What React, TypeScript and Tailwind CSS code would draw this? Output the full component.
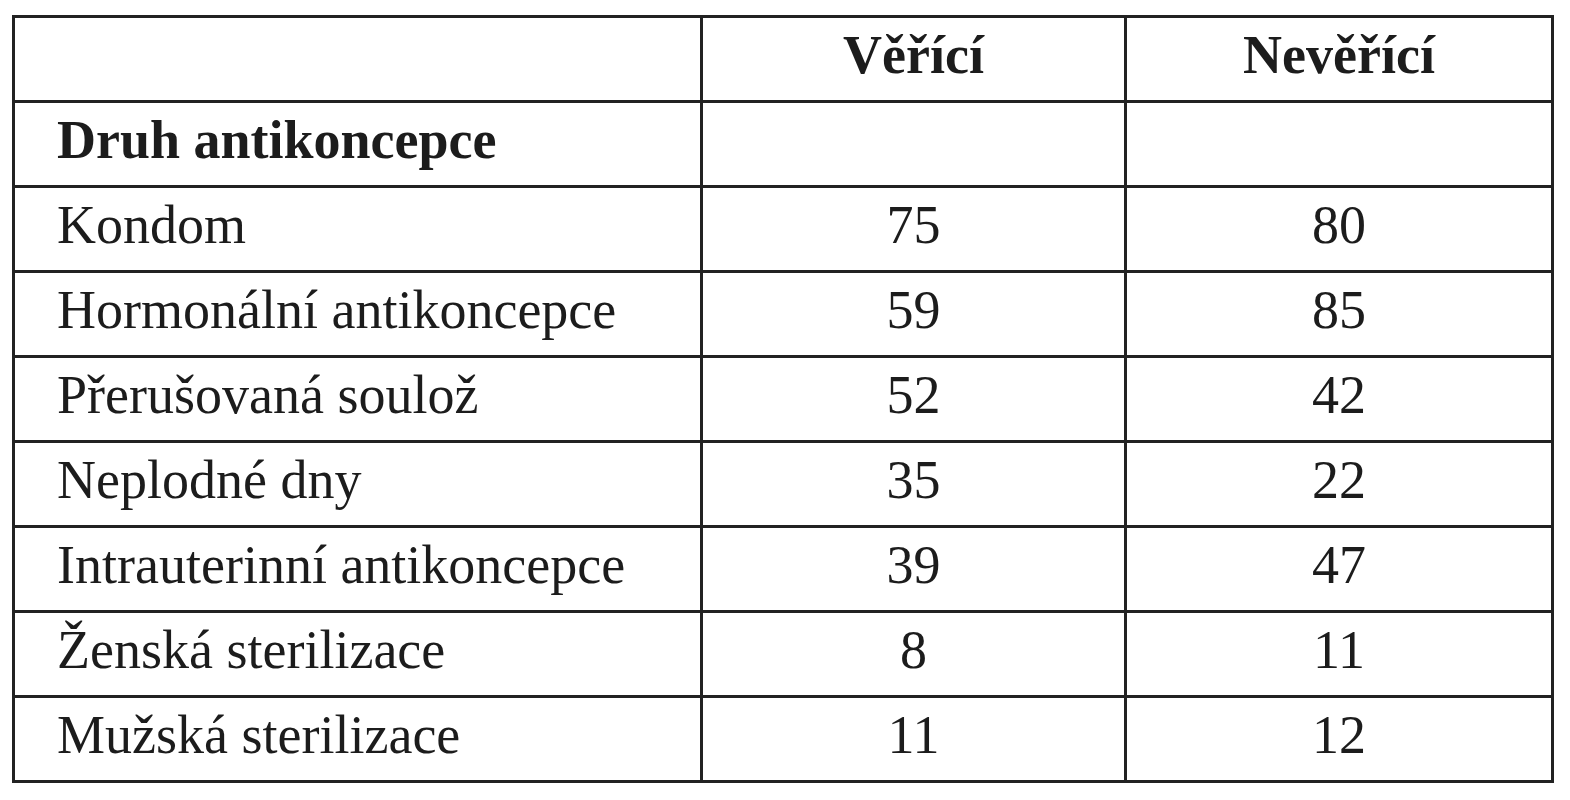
const ROWS: [string, string, string][] = [
  ["Kondom", "75", "80"],
  ["Hormonální antikoncepce", "59", "85"],
  ["Přerušovaná soulož", "52", "42"],
  ["Neplodné dny", "35", "22"],
  ["Intrauterinní antikoncepce", "39", "47"],
  ["Ženská sterilizace", "8", "11"],
  ["Mužská sterilizace", "11", "12"],
]

const cell = "h-[85px] border-r-[3px] border-b-[3px] border-[#222] flex items-center pb-[8px]"

export default function App() {
  return (
    <div className="w-[1570px] h-[800px] bg-white pl-[12px] pt-[15px] font-['Liberation_Serif',serif] text-[54px] leading-none text-[#1c1c1c]">
      <div className="grid grid-cols-[688px_424px_427px] w-[1542px] border-l-[3px] border-t-[3px] border-[#222]">
        {/* header */}
        <div className={cell}></div>
        <div className={`${cell} justify-center font-bold`}>Věřící</div>
        <div className={`${cell} justify-center font-bold`}>Nevěřící</div>

        <div className={`${cell} pl-[42px] font-bold`}>Druh antikoncepce</div>
        <div className={cell}></div>
        <div className={cell}></div>

        {ROWS.map(([label, a, b]) => (
          <div key={label} className="contents">
            <div className={`${cell} pl-[42px]`}>{label}</div>
            <div className={`${cell} justify-center`}>{a}</div>
            <div className={`${cell} justify-center`}>{b}</div>
          </div>
        ))}
      </div>
    </div>
  )
}
